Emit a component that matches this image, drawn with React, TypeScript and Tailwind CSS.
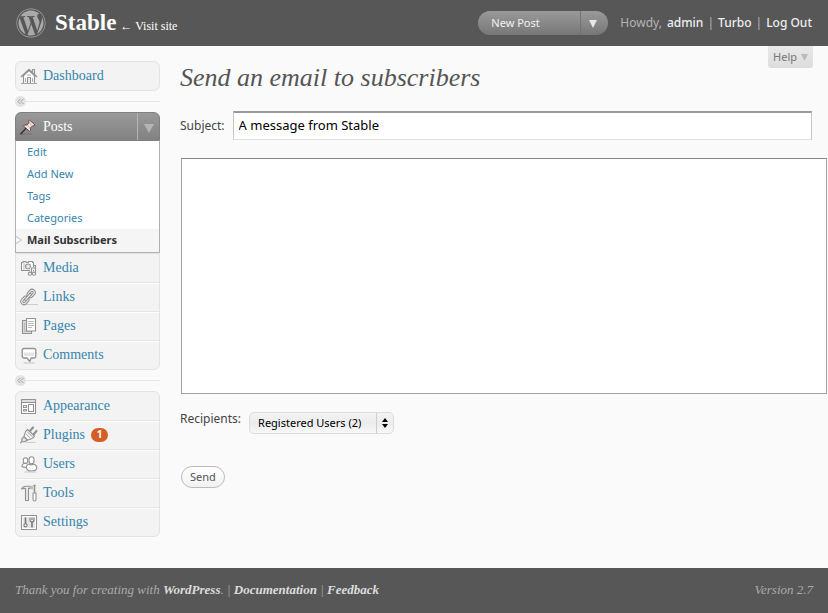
import { useState } from 'react';
import type { ReactNode } from 'react';
import { FaWordpress } from 'react-icons/fa';

interface MenuItem {
  label: string;
  icon: ReactNode;
  count?: number;
}

function MenuIcon({ children }: { children: ReactNode }) {
  return (
    <svg
      viewBox="0 0 18 18"
      className="h-[18px] w-[18px] shrink-0"
      fill="none"
      stroke="#929292"
      strokeWidth="1.1"
      strokeLinecap="round"
      strokeLinejoin="round"
      aria-hidden="true"
    >
      {children}
    </svg>
  );
}

const dashboardIcon = (
  <MenuIcon>
    <path d="M3.5 8.5v8h11v-8L9 3.5z" fill="#fff" />
    <path d="M12.5 5.5v-3h2v5" fill="#fff" />
    <path d="M1.500 9.500 9 2.500l7.500 7" strokeWidth="1.600" />
    <path d="M7.500 16v-5.500h3V16" fill="#eee" />
    <path d="M5.500 11.500v3M12.500 11.500v3M7.500 8h3" stroke="#aaa" />
    <path d="M1.500 16.500h15" stroke="#a5a5a5" />
  </MenuIcon>
);

const postsIcon = (
  <svg viewBox="0 0 18 18" className="h-[18px] w-[18px] shrink-0" aria-hidden="true">
    <path d="M2 16h10" stroke="#5c5656" strokeWidth="1" opacity=".4" />
    <path d="M1 15.800 6 10.200" stroke="#40302e" strokeWidth="1.600" strokeLinecap="round" />
    <path
      d="M9.400 2 15 6.900l-.8 1.200-1.600-.4-2.300 2.400.3 2.200-1.200.9L3.600 8.100l.9-1.200 2.400.2L9.100 4.800 8.500 3z"
      fill="#f3e2e0"
      stroke="#5c4543"
      strokeWidth=".9"
      strokeLinejoin="round"
    />
    <path d="m6.800 7.200 3.500 3M9.100 4.900l3.500 3" stroke="#c2a8a6" strokeWidth=".7" />
  </svg>
);

const mediaMenu: MenuItem[] = [
  {
    label: 'Media',
    icon: (
      <MenuIcon>
        <path d="M1.500 3.500h1.500v-1h3v1h2.500v-1h4v1h1v8h-12z" fill="#fff" />
        <path d="M4 4v7" stroke="#bbb" />
        <circle cx="8" cy="7.500" r="2.500" fill="#e8e8e8" />
        <path d="M11.500 14V9.500h4V14" stroke="#f3f3f3" strokeWidth="3" />
        <path d="M11.500 14.500V9h4v5.500M13.500 6.500h2V9" />
        <circle cx="9.900" cy="14.700" r="1.600" fill="#fff" />
        <circle cx="14" cy="14.700" r="1.600" fill="#fff" />
      </MenuIcon>
    ),
  },
  {
    label: 'Links',
    icon: (
      <MenuIcon>
        <path d="M5 16.500h13" stroke="#cecece" />
        <g fill="none" transform="rotate(42 8 9)">
          <rect x="5.800" y="0.800" width="4.400" height="7" rx="2.200" stroke="#8a8a8a" strokeWidth="3" />
          <rect x="5.800" y="0.800" width="4.400" height="7" rx="2.200" stroke="#f2f2f2" strokeWidth="1.100" />
          <rect x="5.800" y="10.200" width="4.400" height="7" rx="2.200" stroke="#8a8a8a" strokeWidth="3" />
          <rect x="5.800" y="10.200" width="4.400" height="7" rx="2.200" stroke="#f2f2f2" strokeWidth="1.100" />
          <path d="M8 5.500v7" stroke="#8a8a8a" strokeWidth="3" />
          <path d="M8 5.500v7" stroke="#f2f2f2" strokeWidth="1.100" />
        </g>
      </MenuIcon>
    ),
  },
  {
    label: 'Pages',
    icon: (
      <MenuIcon>
        <path d="M6 3.500H2.500v13h9V14" fill="#ddd" />
        <path d="M4.500 6v8.500h5" stroke="#bbb" />
        <path d="M6.500 1.500h9v12.500h-9z" fill="#fff" />
        <path d="M8.500 4.500h5M8.500 6.500h5M8.500 8.500h5M8.500 10.500h3" stroke="#bbb" />
      </MenuIcon>
    ),
  },
  {
    label: 'Comments',
    icon: (
      <MenuIcon>
        <path
          d="M4 2.500h10a1.800 1.800 0 0 1 1.800 1.800v5.900a1.800 1.800 0 0 1-1.800 1.800h-3L9.800 15.500 7 12H4a1.800 1.800 0 0 1-1.800-1.800V4.300A1.800 1.800 0 0 1 4 2.500z"
          fill="#fff"
          strokeWidth="1.300"
        />
        <path d="M4 6.500h10V10H4z" fill="#e4e4e4" stroke="none" />
        <path d="M4 17h10" stroke="#c4c4c4" />
      </MenuIcon>
    ),
  },
];

const settingsMenu: MenuItem[] = [
  {
    label: 'Appearance',
    icon: (
      <MenuIcon>
        <path d="M1.500 2.500h14v14h-14z" fill="#fff" />
        <path d="M2 3h13v2.500H2z" fill="#ddd" stroke="none" />
        <path d="M2 5.500h13M3.500 8.500h3v2h-3zM3.500 12.500h3v1.500h-3zM8.500 7.500h5v7h-5z" />
      </MenuIcon>
    ),
  },
  {
    label: 'Plugins',
    count: 1,
    icon: (
      <MenuIcon>
        <path d="M7 16.500h8" stroke="#cecece" />
        <path d="m9.500 5.500 3.500-4M13 9l3.500-4" strokeWidth="2.200" />
        <path
          d="M7.500 3.500 14.500 10c-1 1.800-3 3.200-5.200 3.400L7.500 14 4 10.600l.5-2C4.800 6.500 6 4.500 7.500 3.500z"
          fill="#fff"
        />
        <path d="m7.500 6 4.800 4.500M6 8l4 3.800" stroke="#bbb" />
        <path d="M4 10.600 1.800 12.800v3h3.200L7.500 14z" fill="#ddd" />
        <path d="m1.800 15.800-1.300 1" />
      </MenuIcon>
    ),
  },
  {
    label: 'Users',
    icon: (
      <MenuIcon>
        <path d="M6 8.300c-2.300-.4-4 .8-4 3.200 1.200 1 2.800 1 4.500.9" fill="#fff" />
        <rect x="3.300" y="2.800" width="4.400" height="5.600" rx="2.200" fill="#fff" />
        <rect x="9" y="1.800" width="5" height="7" rx="2.500" fill="#fff" />
        <path
          d="M9 9c-2.500 1-3.300 3.100-2.300 4.900 1.500 2.800 8.300 2.800 9.800.2.800-2.500-.8-4.300-3-5.100-1.200 1-3.300 1-4.500 0z"
          fill="#fff"
        />
        <path d="M5 17h11" stroke="#c8c8c8" />
      </MenuIcon>
    ),
  },
  {
    label: 'Tools',
    icon: (
      <MenuIcon>
        <path d="M1.500 5c1-2 2.600-2.800 4.500-2.800h4v2.300H8.500v12h-3v-12C4 4.300 3 4.300 1.500 5z" fill="#e8e8e8" />
        <path d="M14.500 2.500v6M14 1.500h1" strokeWidth="1.600" />
        <path d="M13 9h3v6.500a1.500 1.500 0 0 1-3 0zM12 2v3" fill="#fff" />
      </MenuIcon>
    ),
  },
  {
    label: 'Settings',
    icon: (
      <MenuIcon>
        <path d="M1.500 2.500h15v14h-15z" fill="#fff" />
        <path d="M3 4h12v11H3z" fill="#e6e6e6" stroke="none" />
        <g stroke="#777">
          <path d="M5.500 5v5.500M12 9.500V14" strokeWidth="1.600" />
          <circle cx="5.500" cy="12.300" r="1.600" fill="#fff" />
          <path d="M10 5v2.300c0 1 .8 1.700 2 1.700s2-.7 2-1.700V5M12 5v1.500" />
        </g>
      </MenuIcon>
    ),
  },
];

const postLinks = ['Edit', 'Add New', 'Tags', 'Categories'];

function Separator() {
  return (
    <div className="flex h-[21px] items-center">
      <button
        aria-label="Collapse menu"
        className="flex h-[11px] w-[11px] items-center justify-center rounded-full bg-[#e4e4e4]"
      >
        <svg viewBox="0 0 8 8" className="h-[7px] w-[7px]" fill="none" stroke="#999" aria-hidden="true">
          <path d="M4 1 1 4l3 3M7.500 1l-3 3 3 3" />
        </svg>
      </button>
      <div className="h-px flex-1 bg-[#e6e6e6]" />
    </div>
  );
}

function MenuRow({ item }: { item: MenuItem }) {
  return (
    <li className="group border-b border-[#e5e5e5] last:border-b-0">
      <a
        href="#"
        className="flex h-7 items-center gap-1 border-t border-[#fcfcfc] pb-[2px] pl-1 font-['Liberation_Serif',serif] text-[14px] text-[#3585ad] group-first:border-transparent"
      >
        {item.icon}
        <span className="pl-px">{item.label}</span>
        {item.count && (
          <span className="ml-[2px] flex h-[14px] w-[17px] items-center justify-center rounded-full bg-[#d45f26] font-['Noto_Sans',sans-serif] text-[10px] font-bold text-white">
            {item.count}
          </span>
        )}
      </a>
    </li>
  );
}

function Header() {
  return (
    <header className="flex h-[46px] items-center justify-between bg-[#575757] px-4 text-[#b4b4b4]">
      <div className="flex items-center gap-[9px] font-['Liberation_Serif',serif] text-white">
        <FaWordpress className="h-[30px] w-[30px] text-[#a9a9a9]" />
        <h1 className="flex items-baseline gap-1">
          <span className="text-[23px] font-bold">Stable</span>
          <a href="#" className="text-[12px]">
            ← Visit site
          </a>
        </h1>
      </div>
      <div className="flex items-center gap-3">
        <div className="flex h-6 overflow-hidden rounded-full bg-linear-to-b from-[#9a9a9a] to-[#777] text-[11px] text-[#f2f2f2]">
          <button className="w-[102px] pl-[13px] text-left">New Post</button>
          <button
            aria-label="More actions"
            className="flex w-7 items-center justify-center border-l border-[#737373] pr-1"
          >
            <svg viewBox="0 0 8 8" className="mt-px h-2 w-2" fill="#e8e8e8" aria-hidden="true">
              <path d="M0 0h8L4 8z" />
            </svg>
          </button>
        </div>
        <p className="flex gap-1 text-[12px]">
          <span className="pr-px">Howdy,</span>
          <a href="#" className="font-medium text-[#eee]">admin</a>
          <span>|</span>
          <a href="#" className="font-medium text-[#eee]">Turbo</a>
          <span>|</span>
          <a href="#" className="font-medium text-[#eee]">Log Out</a>
        </p>
      </div>
    </header>
  );
}

function Sidebar() {
  return (
    <nav className="w-[145px] shrink-0 pt-[15px]">
      <ul className="rounded-md border border-[#e3e3e3] bg-[#f3f3f3]">
        <MenuRow item={{ label: 'Dashboard', icon: dashboardIcon }} />
      </ul>
      <Separator />

      <div className="flex h-[29px] overflow-hidden rounded-t-md border border-[#7f7f7f] bg-linear-to-b from-[#999] to-[#828282] font-['Liberation_Serif',serif] text-[14px] text-white">
        <a href="#" className="flex flex-1 items-center gap-1 pl-1">
          {postsIcon}
          <span className="pl-px">Posts</span>
        </a>
        <button
          aria-label="Toggle Posts menu"
          className="flex w-[22px] items-center justify-center border-l border-[#b5b5b5]"
        >
          <svg viewBox="0 0 10 9" className="mt-1 h-[9px] w-[10px]" fill="#b4b4b4" aria-hidden="true">
            <path d="M0 0h10L5 9z" />
          </svg>
        </button>
      </div>
      <ul className="border border-t-0 border-[#b0b0b0] bg-white text-[11px] leading-[22px]">
        {postLinks.map((label) => (
          <li key={label}>
            <a href="#" className="block pl-[11px] text-[#3585ad]">
              {label}
            </a>
          </li>
        ))}
        <li className="flex items-center bg-[#f5f5f5] pb-px">
          <svg viewBox="0 0 6 8" className="h-2 w-[6px]" fill="#fafafa" stroke="#bbb" aria-hidden="true">
            <path d="M0 .5 5.500 4 0 7.500" />
          </svg>
          <a href="#" className="pl-[5px] font-bold text-[#333]">
            Mail Subscribers
          </a>
        </li>
      </ul>
      <ul className="rounded-b-md border border-[#e3e3e3] bg-[#f3f3f3]">
        {mediaMenu.map((item) => (
          <MenuRow key={item.label} item={item} />
        ))}
      </ul>
      <Separator />

      <ul className="rounded-md border border-[#e3e3e3] bg-[#f3f3f3]">
        {settingsMenu.map((item) => (
          <MenuRow key={item.label} item={item} />
        ))}
      </ul>
    </nav>
  );
}

function MailForm() {
  const [subject, setSubject] = useState('A message from Stable');
  const [message, setMessage] = useState('');

  return (
    <form className="text-[12px] text-[#444]" onSubmit={(e) => e.preventDefault()}>
      <div className="mr-4 flex items-center gap-2">
        <label htmlFor="subject">Subject:</label>
        <input
          id="subject"
          type="text"
          value={subject}
          onChange={(e) => setSubject(e.target.value)}
          className="h-[29px] min-w-0 flex-1 border border-t-2 border-[#c6c6c6] border-t-[#9a9a9a] border-b-[#dfdfdf] bg-white px-[5px] pb-[2px] text-[13px] text-black outline-none"
        />
      </div>
      <div className="mt-[18px] px-px">
        <textarea
          aria-label="Message"
          value={message}
          onChange={(e) => setMessage(e.target.value)}
          className="block h-[236px] w-full resize-none border border-[#a3a3a3] border-t-[#858585] bg-white p-1 text-[13px] text-black outline-none"
        />
      </div>
      <div className="mt-4 flex items-start gap-2">
        <label htmlFor="recipients">Recipients:</label>
        <div className="relative mt-[2px]">
          <select
            id="recipients"
            className="h-[22px] w-[145px] appearance-none rounded-[5px] border border-[#dcdcdc] bg-linear-to-b from-[#f4f4f4] via-[#ececec] to-[#f8f8f8] pl-2 text-[11px] text-black outline-none"
          >
            <option>Registered Users (2)</option>
          </select>
          <span className="pointer-events-none absolute inset-y-px right-px flex w-[17px] items-center justify-center border-l border-[#ccc]">
            <svg viewBox="0 0 6 10" className="h-[10px] w-[6px]" fill="#000" aria-hidden="true">
              <path d="M3 0l3 4H0zM3 10l3-4H0z" />
            </svg>
          </span>
        </div>
      </div>
      <button
        type="submit"
        className="mt-8 ml-px h-[22px] rounded-full border border-[#bbb] bg-linear-to-b from-white to-[#f2f2f2] px-2 text-[11px] text-[#555]"
      >
        Send
      </button>
    </form>
  );
}

export default function App() {
  return (
    <div className="flex min-h-screen flex-col bg-[#fafafa] font-['Noto_Sans',sans-serif]">
      <Header />
      <div className="flex flex-1 gap-5 pb-[31px] pl-[15px]">
        <Sidebar />
        <main className="min-w-0 flex-1">
          <div className="mr-4 flex items-start justify-between">
            <h2 className="pt-3 font-['Liberation_Serif',serif] text-[26px] leading-10 text-[#555] italic">
              Send an email to subscribers
            </h2>
            <button className="-mr-px flex h-[22px] items-center gap-1 rounded-b-[3px] bg-linear-to-b from-[#e9e9e9] to-[#dcdcdc] px-[5px] text-[11px] text-[#777]">
              Help
              <svg viewBox="0 0 7 7" className="h-[7px] w-[7px]" fill="#bbb" aria-hidden="true">
                <path d="M0 0h7L3.500 7z" />
              </svg>
            </button>
          </div>
          <div className="pt-[13px]">
            <MailForm />
          </div>
        </main>
      </div>
      <footer className="flex h-[45px] items-center justify-between bg-[#575757] px-[15px] pb-[2px] font-['Liberation_Serif',serif] text-[13px] text-[#aaa] italic">
        <p>
          Thank you for creating with <a href="#" className="font-bold text-[#dcdcdc]">WordPress</a>. |{' '}
          <a href="#" className="font-bold text-[#dcdcdc]">Documentation</a> |{' '}
          <a href="#" className="font-bold text-[#dcdcdc]">Feedback</a>
        </p>
        <p>Version 2.7</p>
      </footer>
    </div>
  );
}
